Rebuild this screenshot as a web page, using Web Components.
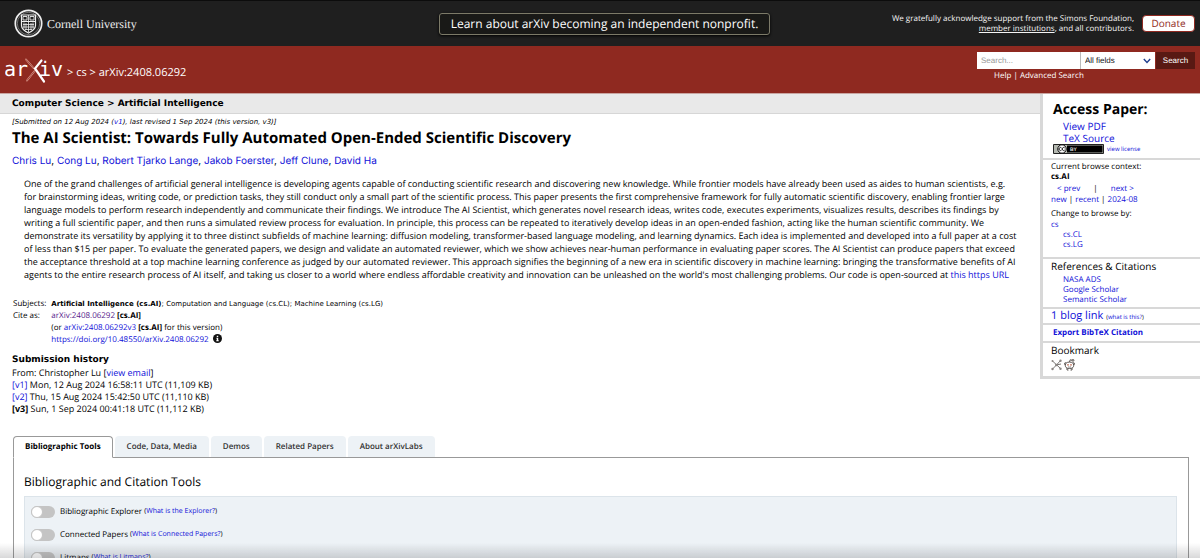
<!DOCTYPE html>
<html lang="en">
<head>
<meta charset="utf-8">
<title>[2408.06292] The AI Scientist: Towards Fully Automated Open-Ended Scientific Discovery</title>
<style>
  html { scrollbar-width: none; }
  body { margin: 0; background: #fff; color: #000; font: 8px/12px "Open Sans", "Noto Sans", sans-serif; text-rendering: geometricPrecision; }
</style>
</head>
<body>
<paper-page></paper-page>
<script>
const base = `
  *, *::before, *::after { box-sizing: border-box; }
  h1, h2, h3, p, ul { margin: 0; padding: 0; }
  ul { list-style: none; }
  a { color: #1010d8; text-decoration: none; }
  button, input, select { font: inherit; margin: 0; text-rendering: inherit; }
`;
function define(name, css, html) {
  const template = document.createElement('template');
  template.innerHTML = `<style>${base}${css}</style>${html}`;
  customElements.define(name, class extends HTMLElement {
    constructor() {
      super();
      this.attachShadow({ mode: 'open' }).append(template.content.cloneNode(true));
    }
  });
}

define('cornell-logo', `
  :host { display: block; }
  a { display: flex; align-items: center; gap: 4px; color: #eee; font: 12px/16px "Liberation Serif", serif; }
  svg { display: block; width: 29px; height: 29px; }
`, `
  <a href="#">
    <svg viewBox="0 0 29 29" fill="none" stroke="#eee" aria-hidden="true">
      <circle cx="14.5" cy="14.5" r="13.2" stroke-width="1.7"/>
      <circle cx="14.5" cy="14.5" r="11.2" stroke-width=".4"/>
      <path d="M7.5 6h14v10.5c0 3.500-3 5.500-7 7.500-4-2-7-4-7-7.500z" stroke-width="1.200"/>
      <path d="M7.500 12.500h14" stroke-width="1"/>
      <path d="M9 7.500h4v3.500H9zM16 7.500h4v3.500h-4z" stroke-width=".9"/>
      <path d="M14.500 6v6M10 13.500v6M12 14v7M14.500 13v10M17 14v7M19 13.500v6M9 15.500h11M9 18h11M11 20.500h7" stroke-width=".8"/>
    </svg>
    <span>Cornell University</span>
  </a>
`);

define('top-banner', `
  :host { display: grid; grid-template-columns: 1fr auto 1fr; align-items: center; height: 46px; padding: 0 5px 0 14px; background: #1f1f1f; border-top: 1px solid #0c0c0c; color: #f4f4f4; }
  .learn { padding: 0 11px; border: 1px solid #7c7a68; border-radius: 3px; background: #191917; color: #fff; font-size: 12px; line-height: 20px; box-shadow: 0 1px 3px #000; }
  .right { display: flex; justify-content: flex-end; align-items: center; gap: 8px; }
  p { text-align: right; line-height: 10px; font-weight: 500; }
  p a { color: inherit; text-decoration: underline; }
  .donate { width: 53px; padding: 0; border: 1px solid #8f2920; border-radius: 4px; background: #fff; color: #8f2920; font-size: 10px; line-height: 15px; text-align: center; }
`, `
  <cornell-logo></cornell-logo>
  <a class="learn" href="#">Learn about arXiv becoming an independent nonprofit.</a>
  <div class="right">
    <p>We gratefully acknowledge support from the Simons Foundation,<br><a href="#">member institutions</a>, and all contributors.</p>
    <button class="donate" type="button">Donate</button>
  </div>
`);

define('arxiv-logo', `
  :host { display: block; }
  svg { display: block; width: 58px; height: 26px; }
  text { font: 20px "DejaVu Sans Mono", monospace; fill: #fff; }
`, `
  <svg viewBox="0 0 58 26" role="img" aria-label="arXiv">
    <text x="-1" y="18">ar</text><text x="34" y="18">iv</text>
    <path d="M21 1.500l7.500 8.500M30 12.500l-8 10" stroke="#e3a79b" stroke-width="1.800" stroke-linecap="round"/>
    <path d="M21 1.500l7.500 8.500M30 12.500l-8 10" stroke="#8f2920" stroke-width=".8" stroke-linecap="round"/>
    <path d="M36.500 2.500l-6.500 8 9 13" stroke="#fff" stroke-width="2.200" stroke-linecap="round" fill="none"/>
  </svg>
`);

define('search-form', `
  :host { display: block; }
  form { display: flex; height: 17px; font: 8px/12px "Liberation Sans", sans-serif; }
  input { width: 104px; padding: 0 4px; border: 0; border-right: 1px solid #bbb; border-radius: 0; background: #fff; }
  input::placeholder { color: #999; opacity: 1; }
  .pick { position: relative; display: block; }
  select { appearance: none; width: 74px; height: 17px; padding: 0 4px; border: 0; border-radius: 0; background: #fff; color: #111; }
  .pick svg { position: absolute; right: 4px; top: 6px; width: 8px; height: 6px; pointer-events: none; }
  button { width: 39px; margin-left: 1px; padding: 0; border: 0; background: #591913; color: #fff; }
  p { margin-top: 2px; padding-left: 17px; color: #fff; font-weight: 500; line-height: 10px; }
  p a { color: inherit; }
`, `
  <form onsubmit="return false">
    <input type="text" placeholder="Search..." aria-label="Search term">
    <label class="pick"><select aria-label="Field to search"><option>All fields</option><option>Title</option><option>Author</option></select>
      <svg viewBox="0 0 8 6" fill="none" stroke="#1f3f8f" stroke-width="1.400"><path d="M.8 1L4 4.500 7.200 1"/></svg></label>
    <button type="submit">Search</button>
  </form>
  <p><a href="#">Help</a> | <a href="#">Advanced Search</a></p>
`);

define('brand-bar', `
  :host { display: flex; justify-content: space-between; height: 48px; padding: 0 5px; background: #8f2920; border-bottom: 1px solid #c9a5a1; }
  nav { display: flex; align-items: center; gap: 4px; padding-top: 3px; color: #fff; font-size: 11px; line-height: 16px; font-weight: 500; }
  nav a { color: inherit; }
  nav span { padding-top: 4px; }
  search-form { padding-top: 6px; }
`, `
  <nav><a href="#"><arxiv-logo></arxiv-logo></a><span>&gt; <a href="#">cs</a> &gt; arXiv:2408.06292</span></nav>
  <search-form></search-form>
`);

define('paper-abstract', `
  :host { display: block; min-width: 0; }
  .subject { padding: 1px 12px 0; background: #e9e9e9; border-bottom: 1px solid #d6d6d6; font: bold 9px/18px "DejaVu Sans", sans-serif; }
  .body { padding: 0 12px; }
  .date { padding-top: 2px; font: italic 7px/12px "DejaVu Sans", sans-serif; }
  h1 { font-size: 15px; line-height: 20px; }
  .authors { padding-top: 5px; font: 10px/16px "Inter", sans-serif; }
  .abstract { margin: 8px 12px 0; font-size: 9px; line-height: 13px; white-space: nowrap; }
  table { margin-top: 17px; border-collapse: collapse; line-height: 12px; }
  td { padding: 0 5px 0 1px; vertical-align: top; }
  td + td { padding: 0; }
  .topics { font-family: "DejaVu Sans", sans-serif; font-size: 7px; }
  .seen { color: #551a8b; }
  .info { width: 9px; height: 9px; margin: 0 0 -1px 2px; }
  h2 { margin-top: 8px; font: bold 9px/13px "DejaVu Sans", sans-serif; }
  .history { font-size: 9px; line-height: 12px; }
`, `
  <div class="subject">Computer Science &gt; Artificial Intelligence</div>
  <div class="body">
    <p class="date">[Submitted on 12 Aug 2024 (<a href="#">v1</a>), last revised 1 Sep 2024 (this version, v3)]</p>
    <h1>The AI Scientist: Towards Fully Automated Open-Ended Scientific Discovery</h1>
    <p class="authors"><a href="#">Chris Lu</a>, <a href="#">Cong Lu</a>, <a href="#">Robert Tjarko Lange</a>, <a href="#">Jakob Foerster</a>, <a href="#">Jeff Clune</a>, <a href="#">David Ha</a></p>
    <p class="abstract">One of the grand challenges of artificial general intelligence is developing agents capable of conducting scientific research and discovering new knowledge. While frontier models have already been used as aides to human scientists, e.g.<br>
    for brainstorming ideas, writing code, or prediction tasks, they still conduct only a small part of the scientific process. This paper presents the first comprehensive framework for fully automatic scientific discovery, enabling frontier large<br>
    language models to perform research independently and communicate their findings. We introduce The AI Scientist, which generates novel research ideas, writes code, executes experiments, visualizes results, describes its findings by<br>
    writing a full scientific paper, and then runs a simulated review process for evaluation. In principle, this process can be repeated to iteratively develop ideas in an open-ended fashion, acting like the human scientific community. We<br>
    demonstrate its versatility by applying it to three distinct subfields of machine learning: diffusion modeling, transformer-based language modeling, and learning dynamics. Each idea is implemented and developed into a full paper at a cost<br>
    of less than $15 per paper. To evaluate the generated papers, we design and validate an automated reviewer, which we show achieves near-human performance in evaluating paper scores. The AI Scientist can produce papers that exceed<br>
    the acceptance threshold at a top machine learning conference as judged by our automated reviewer. This approach signifies the beginning of a new era in scientific discovery in machine learning: bringing the transformative benefits of AI<br>
    agents to the entire research process of AI itself, and taking us closer to a world where endless affordable creativity and innovation can be unleashed on the world's most challenging problems. Our code is open-sourced at <a href="#">this https URL</a></p>
    <table>
      <tr><td>Subjects:</td><td class="topics"><b>Artificial Intelligence (cs.AI)</b>; Computation and Language (cs.CL); Machine Learning (cs.LG)</td></tr>
      <tr><td>Cite as:</td><td><a class="seen" href="#">arXiv:2408.06292</a> <b>[cs.AI]</b></td></tr>
      <tr><td></td><td>(or <a href="#">arXiv:2408.06292v3</a> <b>[cs.AI]</b> for this version)</td></tr>
      <tr><td></td><td><a href="#">https://doi.org/10.48550/arXiv.2408.06292</a>
        <svg class="info" viewBox="0 0 10 10" aria-hidden="true"><circle cx="5" cy="5" r="5" fill="#111"/><path d="M4.200 2h1.600v1.400H4.200zM3.800 4.300h2v2.700h.6V8H3.600V7h.6V5.200h-.4z" fill="#fff"/></svg></td></tr>
    </table>
    <h2>Submission history</h2>
    <div class="history">
      <p>From: Christopher Lu [<a href="#">view email</a>]</p>
      <p><a href="#">[v1]</a> Mon, 12 Aug 2024 16:58:11 UTC (11,109 KB)</p>
      <p><a href="#">[v2]</a> Thu, 15 Aug 2024 15:42:50 UTC (11,110 KB)</p>
      <p><b>[v3]</b> Sun, 1 Sep 2024 00:41:18 UTC (11,112 KB)</p>
    </div>
  </div>
`);

define('side-section', `
  :host { display: block; padding: 0 8px; border-bottom: 2px solid #d8d8d8; }
  :host(:last-of-type) { border-bottom: 0; }
`, `<slot></slot>`);

define('paper-sidebar', `
  :host { display: block; border: solid #d8d8d8; border-width: 0 0 3px 3px; background: #fff; line-height: 10px; }
  h2 { padding: 6px 2px 0; font-size: 14px; line-height: 20px; }
  h3 { font-size: 10px; line-height: 14px; font-weight: 500; }
  .formats { padding-left: 12px; font-size: 10px; line-height: 12px; }
  .license { display: flex; align-items: center; gap: 3px; padding: 0 2px 4px; font-size: 6px; }
  .license svg { width: 51px; height: 10px; }
  .license text { font: bold 5px "Liberation Sans", sans-serif; }
  .context { padding: 2px 0 7px; }
  .pager { display: flex; gap: 13px; padding: 1px 6px 1px; line-height: 11px; }
  .change { padding-top: 3px; line-height: 12px; }
  .indent { padding-left: 12px; }
  .refs { padding: 0 0 2px; }
  .refs ul { padding-top: 2px; }
  .blog { display: flex; align-items: baseline; gap: 3px; font-size: 11px; line-height: 14px; }
  .blog small { font-size: 6px; line-height: 8px; }
  .export { padding: 2px; font-weight: 700; line-height: 12px; }
  .marks { display: flex; gap: 2px; padding: 2px 0 5px; }
  .marks a, .marks svg { display: block; }
  .marks svg { width: 11px; height: 12px; }
`, `
  <side-section>
    <h2>Access Paper:</h2>
    <ul class="formats"><li><a href="#">View PDF</a></li><li><a href="#">TeX Source</a></li></ul>
    <div class="license">
      <svg viewBox="0 0 51 10" role="img" aria-label="Creative Commons BY">
        <path d="M.5.5h50v9H.5z" fill="#b4b8b0" stroke="#222"/><path d="M14 1.500h35.500v7H14z"/>
        <circle cx="9" cy="5" r="4.200" fill="#fff" stroke="#000"/>
        <path d="M8.500 3.900a1.500 1.500 0 1 0 0 2.200M11.700 3.900a1.500 1.500 0 1 0 0 2.200" fill="none" stroke="#000" stroke-width=".9"/>
        <text x="17" y="7" fill="#ddd">BY</text>
      </svg>
      <a href="#">view license</a>
    </div>
  </side-section>
  <side-section>
    <div class="context">
      <p>Current browse context:</p>
      <p><b>cs.AI</b></p>
      <div class="pager"><a href="#">&lt; prev</a><span>|</span><a href="#">next &gt;</a></div>
      <p><a href="#">new</a> | <a href="#">recent</a> | <a href="#">2024-08</a></p>
      <p class="change">Change to browse by:</p>
      <p class="cs"><a href="#">cs</a></p>
      <ul class="indent"><li><a href="#">cs.CL</a></li><li><a href="#">cs.LG</a></li></ul>
    </div>
  </side-section>
  <side-section>
    <div class="refs"><h3>References &amp; Citations</h3>
    <ul class="indent"><li><a href="#">NASA ADS</a></li><li><a href="#">Google Scholar</a></li><li><a href="#">Semantic Scholar</a></li></ul></div>
  </side-section>
  <side-section><p class="blog"><a href="#">1 blog link</a> <small>(<a href="#">what is this?</a>)</small></p></side-section>
  <side-section><p class="export"><a href="#">Export BibTeX Citation</a></p></side-section>
  <side-section>
    <h3>Bookmark</h3>
    <div class="marks">
      <a href="#" aria-label="BibSonomy"><svg viewBox="0 0 11 12" fill="none" stroke="#6b6663" stroke-width=".9"><path d="M1.500 2l8 7.500M9.500 1.500L5.500 6l-4 4M5 6l5-1"/><g fill="#8b8683" stroke="none"><circle cx="1.500" cy="2" r="1"/><circle cx="9.500" cy="1.800" r="1.200"/><circle cx="1.500" cy="10" r="1.200"/><circle cx="9.500" cy="9.700" r="1.200"/><circle cx="5.300" cy="6" r="1.300"/></g></svg></a>
      <a href="#" aria-label="Reddit"><svg viewBox="0 0 11 12" fill="#fff" stroke="#4a4340" stroke-width=".9"><circle cx="1.600" cy="4.800" r="1.100"/><circle cx="9.400" cy="4.800" r="1.100"/><path d="M3 8.500V11h1.500M8 8.500V11H6.500"/><ellipse cx="5.500" cy="6.300" rx="4.200" ry="3.200"/><path d="M5.500 3L6.200.8l2.300.5" fill="none"/><circle cx="9" cy="1.400" r=".9"/><g fill="#c0705c" stroke="none"><circle cx="4" cy="5.800" r=".9"/><circle cx="7" cy="5.800" r=".9"/></g><path d="M4 7.800q1.500.8 3 0" fill="none" stroke-width=".6"/></svg></a>
    </div>
  </side-section>
`);

define('labs-toggle', `
  :host { display: flex; align-items: center; gap: 5px; height: 23px; }
  label { display: flex; align-items: center; gap: 5px; }
  input { appearance: none; width: 24px; height: 12px; border-radius: 6px; background: #c4c4c4; }
  input::before { content: ""; display: block; width: 12px; height: 12px; border: 1px solid #c4c4c4; border-radius: 6px; background: #fff; }
  input:checked::before { margin-left: 12px; }
  .about { margin-left: -3px; font-size: 7px; }
`, `
  <label><input type="checkbox"><slot></slot></label>
  <span class="about">(<a href="#"><slot name="about"></slot></a>)</span>
`);

define('labs-tabs', `
  :host { display: block; padding: 21px 11px 0 13px; }
  .tabs { display: flex; gap: 2px; margin-bottom: -1px; }
  button { height: 22px; padding: 0 12px; border: 0; border-bottom: 1px solid #999; border-radius: 4px 4px 0 0; background: #edf2f6; color: #333; font-weight: 600; }
  button[aria-selected=true] { padding: 0 11px; border: 1px solid #999; border-bottom-color: #fff; background: #fff; color: #000; font-weight: 700; }
  .panel { padding: 15px 11px 10px 10px; border: 1px solid #999; }
  h2 { font-size: 12px; line-height: 18px; font-weight: 500; }
  .tools { margin-top: 5px; padding: 3px 6px; border: 1px solid #dce4ea; background: #edf2f6; }
`, `
  <div class="tabs" role="tablist">
    <button role="tab" aria-selected="true">Bibliographic Tools</button>
    <button role="tab">Code, Data, Media</button>
    <button role="tab">Demos</button>
    <button role="tab">Related Papers</button>
    <button role="tab">About arXivLabs</button>
  </div>
  <div class="panel" role="tabpanel">
    <h2>Bibliographic and Citation Tools</h2>
    <div class="tools">
      <labs-toggle>Bibliographic Explorer<span slot="about">What is the Explorer?</span></labs-toggle>
      <labs-toggle>Connected Papers<span slot="about">What is Connected Papers?</span></labs-toggle>
      <labs-toggle>Litmaps<span slot="about">What is Litmaps?</span></labs-toggle>
    </div>
  </div>
`);

define('paper-page', `
  :host { display: block; }
  .columns { display: grid; grid-template-columns: minmax(0, 1fr) 160px; align-items: start; }
  .shade { position: fixed; inset: auto 0 0; height: 15px; background: linear-gradient(transparent, rgba(60, 60, 65, .2)); pointer-events: none; }
`, `
  <header><top-banner></top-banner><brand-bar></brand-bar></header>
  <main>
    <div class="columns"><paper-abstract></paper-abstract><paper-sidebar></paper-sidebar></div>
    <labs-tabs></labs-tabs>
  </main>
  <div class="shade"></div>
`);
</script>
</body>
</html>
